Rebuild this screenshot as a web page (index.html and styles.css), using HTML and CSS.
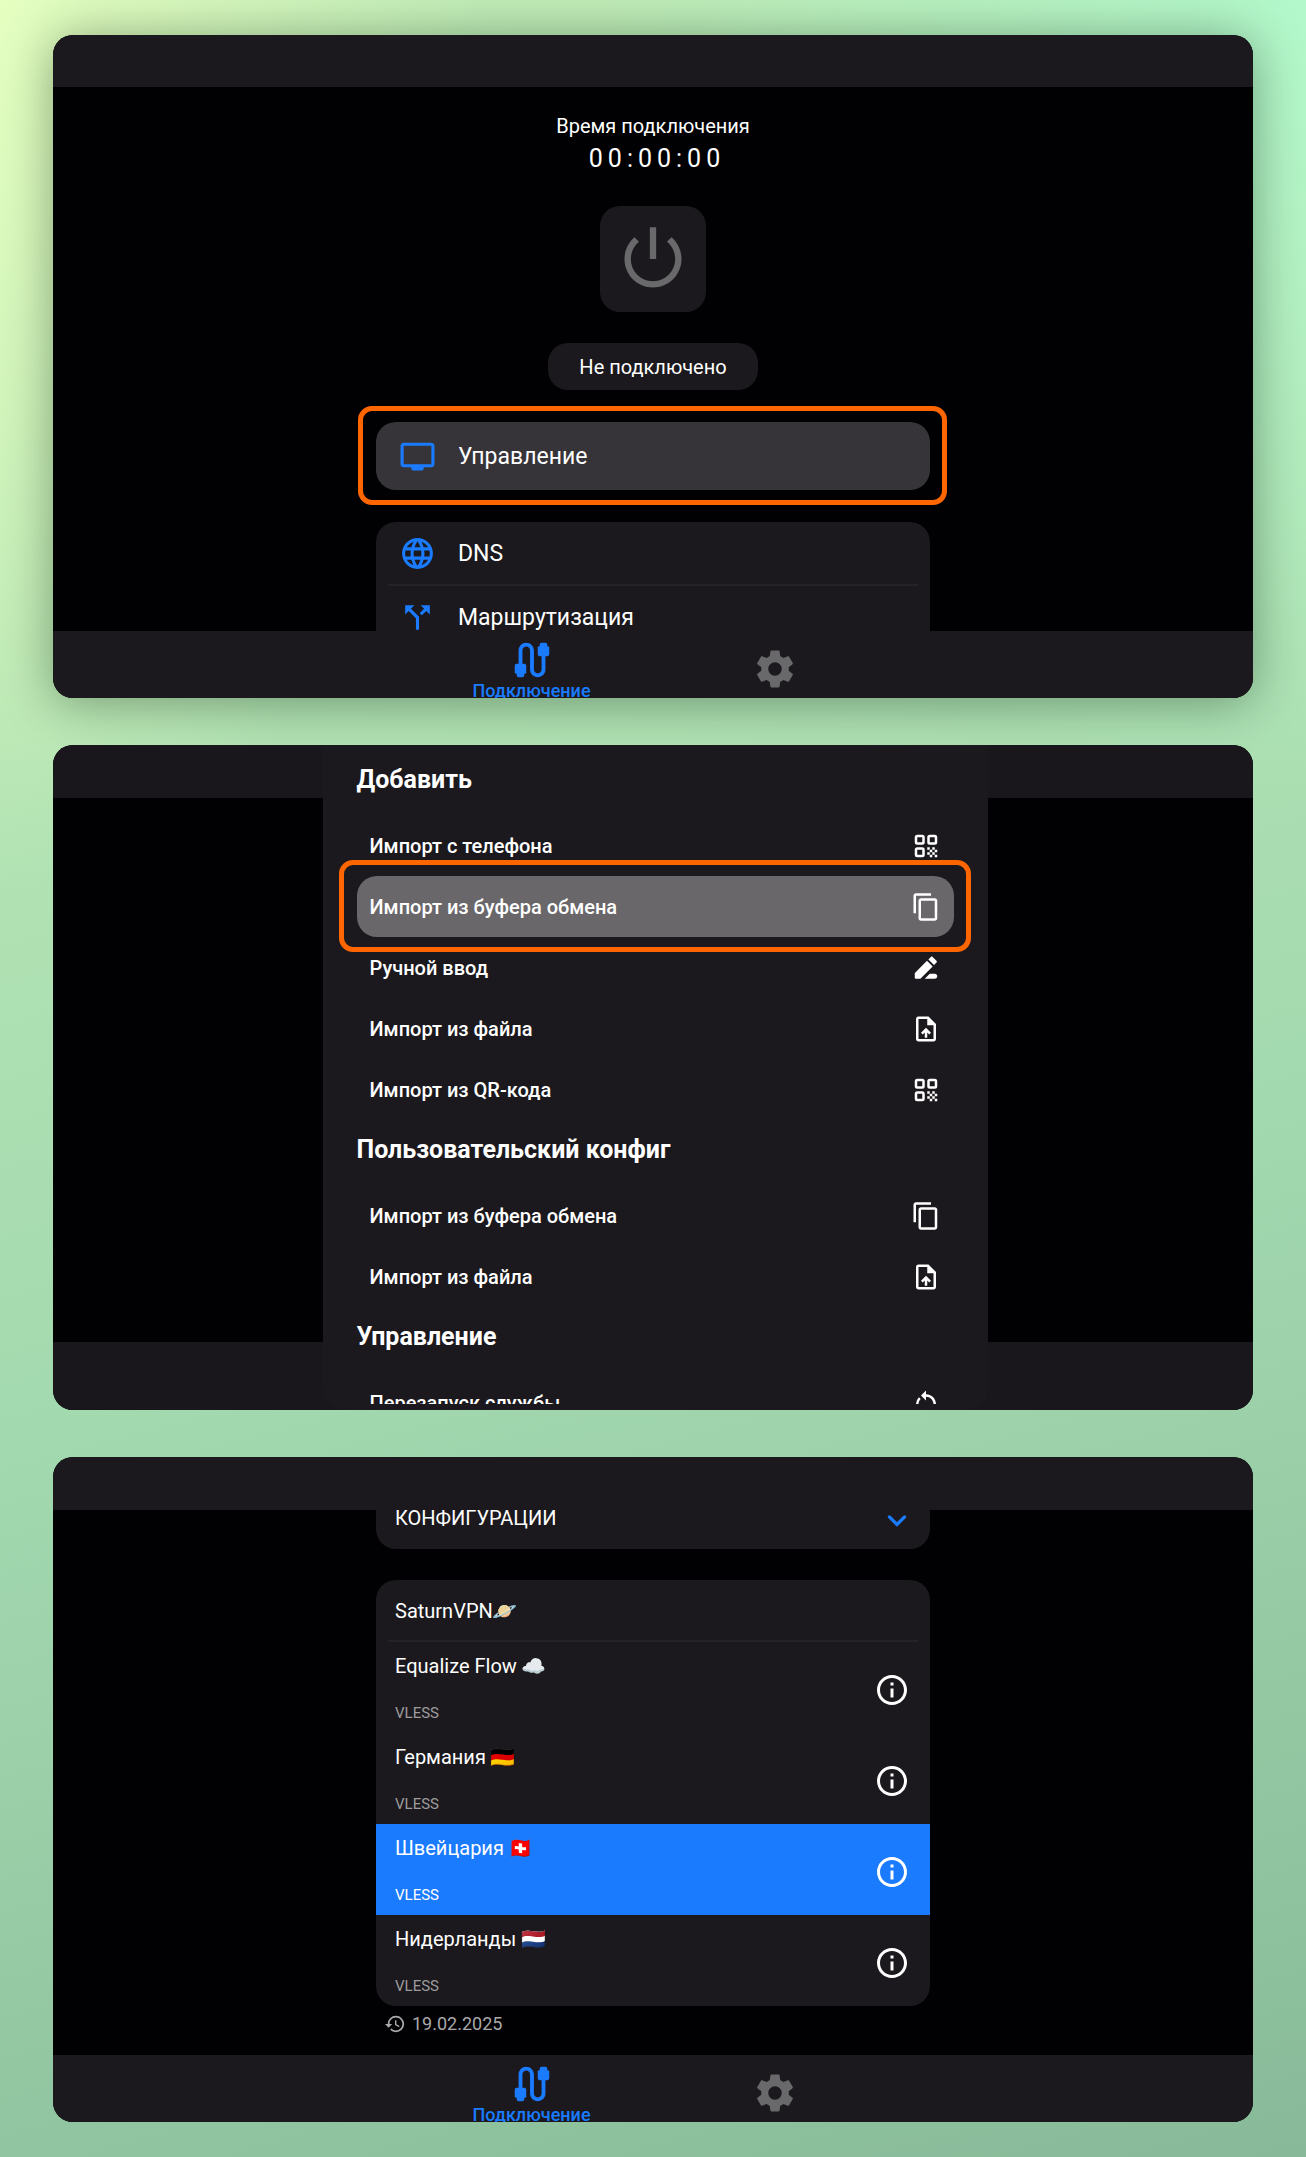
FILE: index.html
```html
<!DOCTYPE html>
<html lang="ru">
<head>
<meta charset="utf-8">
<meta name="viewport" content="width=device-width, initial-scale=1">
<title>Подключение VPN</title>
<link rel="stylesheet" href="styles.css">
</head>
<body>
<svg class="sprite" aria-hidden="true">
  <symbol id="power" viewBox="0 0 24 24"><path d="M13 2h-2v10h2V2zm4.830 3.170-1.420 1.420C17.990 7.860 19 9.810 19 12c0 3.870-3.130 7-7 7s-7-3.130-7-7c0-2.190 1.010-4.140 2.580-5.420L6.170 5.170C4.230 6.820 3 9.260 3 12c0 4.970 4.030 9 9 9s9-4.030 9-9c0-2.740-1.230-5.180-3.170-6.830z"/></symbol>
  <symbol id="tv" viewBox="0 0 24 24"><path d="M21 3H3c-1.100 0-2 .9-2 2v12c0 1.100.9 2 2 2h5v1c0 .55.45 1 1 1h6c.55 0 1-.45 1-1v-1h5c1.100 0 2-.9 2-2V5c0-1.100-.9-2-2-2zm0 14H3V5h18v12z"/></symbol>
  <symbol id="globe" viewBox="0 0 24 24"><path d="M11.990 2C6.470 2 2 6.480 2 12s4.470 10 9.990 10C17.520 22 22 17.520 22 12S17.520 2 11.990 2zm6.930 6h-2.950c-.32-1.250-.78-2.450-1.380-3.560 1.840.63 3.370 1.910 4.330 3.560zM12 4.040c.83 1.200 1.480 2.530 1.910 3.960h-3.820c.43-1.430 1.080-2.760 1.910-3.960zM4.260 14C4.100 13.360 4 12.690 4 12s.1-1.360.26-2h3.380c-.08.66-.14 1.320-.14 2s.06 1.340.14 2H4.260zm.82 2h2.950c.32 1.250.78 2.450 1.380 3.560-1.840-.63-3.370-1.900-4.330-3.560zm2.950-8H5.080c.96-1.660 2.490-2.930 4.330-3.560C8.810 5.550 8.350 6.750 8.030 8zM12 19.960c-.83-1.200-1.480-2.530-1.910-3.960h3.820c-.43 1.430-1.080 2.760-1.910 3.960zM14.340 14H9.660c-.09-.66-.16-1.320-.16-2s.07-1.350.16-2h4.680c.09.65.16 1.320.16 2s-.07 1.340-.16 2zm.25 5.560c.6-1.110 1.060-2.310 1.380-3.560h2.950c-.96 1.650-2.490 2.930-4.330 3.560zM16.360 14c.08-.66.14-1.320.14-2s-.06-1.340-.14-2h3.380c.16.64.26 1.310.26 2s-.1 1.360-.26 2h-3.380z"/></symbol>
  <symbol id="split" viewBox="0 0 24 24"><path d="M14 4l2.290 2.290-2.880 2.880 1.420 1.420 2.880-2.880L20 10V4zM10 4H4v6l2.290-2.290 4.710 4.700V20h2v-8.410l-5.290-5.300z"/></symbol>
  <symbol id="cable" viewBox="0 0 24 24"><path d="M20 5V4c0-.55-.45-1-1-1h-2c-.55 0-1 .45-1 1v1h-1v4c0 .55.45 1 1 1h1v7c0 1.100-.9 2-2 2s-2-.9-2-2V7c0-2.210-1.790-4-4-4S5 4.790 5 7v7H4c-.55 0-1 .45-1 1v4h1v1c0 .55.45 1 1 1h2c.55 0 1-.45 1-1v-1h1v-4c0-.55-.45-1-1-1H7V7c0-1.100.9-2 2-2s2 .9 2 2v10c0 2.210 1.790 4 4 4s4-1.790 4-4v-7h1c.55 0 1-.45 1-1V5h-1z"/></symbol>
  <symbol id="gear" viewBox="0 0 24 24"><path d="M19.140 12.940c.04-.3.06-.61.06-.94 0-.32-.02-.64-.07-.94l2.030-1.580c.18-.14.23-.41.12-.61l-1.920-3.320c-.12-.22-.37-.29-.59-.22l-2.390.96c-.5-.38-1.030-.7-1.620-.94l-.36-2.540c-.04-.24-.24-.41-.48-.41h-3.840c-.24 0-.43.17-.47.41l-.36 2.540c-.59.24-1.130.57-1.620.94l-2.390-.96c-.22-.08-.47 0-.59.22L2.740 8.870c-.12.21-.08.47.12.61l2.030 1.580c-.05.3-.09.63-.09.94s.02.64.07.94l-2.030 1.580c-.18.14-.23.41-.12.61l1.920 3.320c.12.22.37.29.59.22l2.390-.96c.5.38 1.030.7 1.620.94l.36 2.540c.05.24.24.41.48.41h3.840c.24 0 .44-.17.47-.41l.36-2.540c.59-.24 1.130-.56 1.620-.94l2.390.96c.22.08.47 0 .59-.22l1.920-3.320c.12-.22.07-.47-.12-.61l-2.010-1.580zM12 15.500c-1.930 0-3.500-1.570-3.500-3.500s1.570-3.500 3.500-3.500 3.500 1.570 3.500 3.500-1.570 3.500-3.500 3.500z"/></symbol>
  <symbol id="qr" viewBox="0 0 24 24">
    <g fill="none" stroke="currentColor" stroke-width="2"><rect x="4" y="4" width="6" height="6" rx="1"/><rect x="14" y="4" width="6" height="6" rx="1"/><rect x="4" y="14" width="6" height="6" rx="1"/></g>
    <path d="M13 13h2v2h-2zM15 15h2v2h-2zM13 17h2v2h-2zM17 17h2v2h-2zM15 19h2v2h-2zM19 19h2v2h-2zM17 13h2v2h-2zM19 15h2v2h-2z"/>
  </symbol>
  <symbol id="copy" viewBox="0 0 24 24"><path d="M16 1H4c-1.100 0-2 .9-2 2v14h2V3h12V1zm3 4H8c-1.100 0-2 .9-2 2v14c0 1.100.9 2 2 2h11c1.100 0 2-.9 2-2V7c0-1.100-.9-2-2-2zm0 16H8V7h11v14z"/></symbol>
  <symbol id="pen" viewBox="0 0 24 24"><path d="M3 17.500V19.500c0 .6.400 1 1 1h3.500L17.300 10.700 12.800 6.200 3.300 15.800c-.2.200-.3.400-.3.700zM18.400 9.600l2-2c.4-.4.400-1 0-1.400L17.300 3.100c-.4-.4-1-.4-1.400 0l-2 2zM15 16.500l-4 4h8c1.100 0 2-.9 2-2s-.9-2-2-2z"/></symbol>
  <symbol id="file" viewBox="0 0 24 24"><path d="M14 2H6c-1.100 0-2 .9-2 2v16c0 1.100.9 2 2 2h12c1.100 0 2-.9 2-2V8zM18 20H6V4h7v5h5zM8 15l1.400 1.400L11 14.800V19h2v-4.200l1.600 1.600L16 15l-4-4z"/></symbol>
  <symbol id="restart" viewBox="0 0 24 24"><path d="M12 5V2L8 6l4 4V7c3.310 0 6 2.690 6 6 0 2.970-2.170 5.430-5 5.910v2.020c3.950-.49 7-3.850 7-7.930 0-4.420-3.580-8-8-8zM6 13c0-1.650.67-3.150 1.760-4.240L6.340 7.340A7.950 7.950 0 0 0 4 13c0 4.080 3.050 7.440 7 7.930v-2.020c-2.830-.48-5-2.940-5-5.910z"/></symbol>
  <symbol id="info" viewBox="0 0 24 24"><path d="M11 7h2v2h-2zm0 4h2v6h-2zm1-9C6.480 2 2 6.480 2 12s4.480 10 10 10 10-4.480 10-10S17.520 2 12 2zm0 18c-4.410 0-8-3.590-8-8s3.590-8 8-8 8 3.590 8 8-3.590 8-8 8z"/></symbol>
  <symbol id="chevron" viewBox="0 0 24 24"><path d="M5 11l7 7 7-7" fill="none" stroke="currentColor" stroke-width="3" stroke-linecap="round"/></symbol>
  <symbol id="history" viewBox="0 0 24 24"><path d="M13 3a9 9 0 0 0-9 9H1l4 4 4-4H6c0-3.870 3.130-7 7-7s7 3.130 7 7-3.130 7-7 7c-1.930 0-3.680-.79-4.940-2.060l-1.420 1.420A8.950 8.950 0 0 0 13 21a9 9 0 0 0 0-18zm-1 5v5l4.250 2.520.77-1.280-3.520-2.090V8z"/></symbol>
</svg>

<main class="page">
  <section class="screen screen-raised" aria-label="Главный экран">
    <div class="bar-top"></div>
    <div class="content">
      <p class="caption">Время подключения</p>
      <p class="timer">00:00:00</p>
      <button class="power" type="button" aria-label="Подключить"><svg><use href="#power"/></svg></button>
      <p class="status">Не подключено</p>
      <div class="column">
        <button class="row row-manage marked" type="button"><svg class="accent"><use href="#tv"/></svg>Управление</button>
        <div class="group">
          <button class="row" type="button"><svg class="accent"><use href="#globe"/></svg>DNS</button>
          <hr>
          <button class="row" type="button"><svg class="accent"><use href="#split"/></svg>Маршрутизация</button>
        </div>
      </div>
    </div>
    <nav class="bar-bottom">
      <a class="tab tab-active" href="#connection"><svg><use href="#cable"/></svg>Подключение</a>
      <a class="tab" href="#settings" aria-label="Настройки"><svg><use href="#gear"/></svg></a>
    </nav>
  </section>

  <section class="screen" aria-label="Меню управления">
    <div class="backdrop">
      <div class="sheet">
        <div class="sheet-scroll">
          <h2>Добавить</h2>
          <button class="item" type="button">Импорт с телефона<svg><use href="#qr"/></svg></button>
          <button class="item item-selected marked" type="button">Импорт из буфера обмена<svg><use href="#copy"/></svg></button>
          <button class="item" type="button">Ручной ввод<svg><use href="#pen"/></svg></button>
          <button class="item" type="button">Импорт из файла<svg><use href="#file"/></svg></button>
          <button class="item" type="button">Импорт из QR-кода<svg><use href="#qr"/></svg></button>
          <h2>Пользовательский конфиг</h2>
          <button class="item" type="button">Импорт из буфера обмена<svg><use href="#copy"/></svg></button>
          <button class="item" type="button">Импорт из файла<svg><use href="#file"/></svg></button>
          <h2>Управление</h2>
          <button class="item" type="button">Перезапуск службы<svg><use href="#restart"/></svg></button>
        </div>
      </div>
    </div>
  </section>

  <section class="screen" aria-label="Список серверов">
    <div class="bar-top"></div>
    <div class="content content-scrolled">
      <div class="column">
        <button class="configs" type="button">КОНФИГУРАЦИИ<svg class="accent"><use href="#chevron"/></svg></button>
        <div class="group group-servers">
          <h3>SaturnVPN🪐</h3>
          <hr>
          <ul class="servers">
            <li class="server"><div><p class="name">Equalize Flow ☁️</p><p class="proto">VLESS</p></div><button type="button" aria-label="Сведения"><svg><use href="#info"/></svg></button></li>
            <li class="server"><div><p class="name">Германия 🇩🇪</p><p class="proto">VLESS</p></div><button type="button" aria-label="Сведения"><svg><use href="#info"/></svg></button></li>
            <li class="server server-selected"><div><p class="name">Швейцария 🇨🇭</p><p class="proto">VLESS</p></div><button type="button" aria-label="Сведения"><svg><use href="#info"/></svg></button></li>
            <li class="server"><div><p class="name">Нидерланды 🇳🇱</p><p class="proto">VLESS</p></div><button type="button" aria-label="Сведения"><svg><use href="#info"/></svg></button></li>
          </ul>
        </div>
        <p class="updated"><svg><use href="#history"/></svg>19.02.2025</p>
      </div>
    </div>
    <nav class="bar-bottom">
      <a class="tab tab-active" href="#connection"><svg><use href="#cable"/></svg>Подключение</a>
      <a class="tab" href="#settings" aria-label="Настройки"><svg><use href="#gear"/></svg></a>
    </nav>
  </section>
</main>
</body>
</html>
```
FILE: styles.css
```css
:root {
  --panel: #1b191d;
  --accent: #1a7bff;
  --mark: #ff6600;
}

* { box-sizing: border-box; }

body {
  margin: 0;
  background: linear-gradient(165deg, #c4efb9 0%, #a3d9af 58%, #88ba99 100%);
  color: #fff;
  font: 20px/24px Roboto, "Noto Color Emoji", sans-serif;
}

p, h2, h3, ul { margin: 0; padding: 0; font-weight: 400; }

ul { list-style: none; }

svg { display: block; flex: none; fill: currentColor; }

.sprite { position: absolute; width: 0; height: 0; }

button {
  margin: 0;
  padding: 0;
  border: 0;
  background: none;
  color: inherit;
  font: inherit;
  text-align: left;
}

.accent { color: var(--accent); }

.page {
  display: flex;
  flex-direction: column;
  gap: 47px;
  padding: 35px 53px;
  background:
    radial-gradient(ellipse 480px 900px at 0 0, #e4ffc0 0%, #d0f4be00 100%),
    radial-gradient(ellipse 700px 800px at 100% 0, #b2f8ca 0%, #b2f8ca00 100%);
}

.screen {
  display: flex;
  flex-direction: column;
  aspect-ratio: 1200 / 665;
  border-radius: 20px;
  background: #010002;
  overflow: hidden;
}

.screen-raised {
  aspect-ratio: 1200 / 663;
  box-shadow: 0 4px 50px rgba(0, 30, 10, 0.4);
}

.bar-top { flex: none; height: 53px; background: var(--panel); }

.screen-raised .bar-top { height: 52px; }

.content {
  display: flex;
  flex: 1;
  flex-direction: column;
  align-items: center;
  min-height: 0;
  padding-top: 27px;
  overflow: hidden;
}

.timer {
  margin-top: 8px;
  padding-left: 8px;
  font-size: 25px;
  line-height: 26px;
  letter-spacing: 5px;
}

.power {
  display: grid;
  place-items: center;
  width: 106px;
  height: 106px;
  margin-top: 34px;
  border-radius: 20px;
  background: var(--panel);
  color: #69686a;
  flex: none;
}

.power svg { width: 76px; height: 76px; }

.status {
  margin-top: 31px;
  padding: 12px 31px 11px;
  border-radius: 20px;
  background: var(--panel);
}

.column { width: 554px; max-width: 100%; }

.row {
  display: flex;
  align-items: center;
  gap: 22px;
  width: 100%;
  height: 62px;
  padding: 1px 0 0 23px;
  font-size: 23px;
}

.row svg { width: 37px; height: 37px; }

.row-manage {
  height: 68px;
  margin: 32px 0;
  border-radius: 20px;
  background: #363438;
}

.marked { position: relative; }

.marked::after {
  position: absolute;
  inset: -16px -17px -15px -18px;
  border: 5px solid var(--mark);
  border-radius: 14px;
  content: "";
}

.group { border-radius: 20px; background: var(--panel); overflow: hidden; }

hr { height: 2px; margin: 0 12px; border: 0; background: #242326; }

.bar-bottom {
  display: flex;
  flex: none;
  justify-content: center;
  height: 67px;
  background: var(--panel);
  overflow: hidden;
}

.tab {
  display: flex;
  flex-direction: column;
  align-items: center;
  width: 243px;
  padding-top: 15px;
  color: #69686a;
  font-size: 18px;
  font-weight: 500;
  line-height: 16px;
  text-decoration: none;
}

.tab svg { width: 46px; height: 46px; }

.tab-active { padding-top: 6px; color: var(--accent); }

.backdrop {
  display: flex;
  flex: 1;
  justify-content: center;
  min-height: 0;
  padding-left: 4px;
  background: linear-gradient(#19171b 53px, transparent 53px calc(100% - 68px), #19171b calc(100% - 68px));
}

.sheet {
  width: 665px;
  padding: 0 34px 6px;
  border-radius: 0 0 20px 20px;
  background: var(--panel);
}

.sheet-scroll {
  height: 100%;
  padding-top: 5px;
  overflow: visible clip;
}

.sheet h2 {
  padding-bottom: 5px;
  font-size: 25px;
  font-weight: 700;
  line-height: 60px;
}

.item {
  display: flex;
  align-items: center;
  justify-content: space-between;
  width: 100%;
  height: 61px;
  padding: 0 13px;
  border-radius: 20px;
  font-weight: 500;
}

.item svg { width: 30px; height: 30px; }

.item-selected { background: #69676a; }

.content-scrolled { padding-top: 0; }

.configs {
  display: flex;
  align-items: center;
  justify-content: space-between;
  width: 100%;
  height: 39px;
  padding: 0 20px 24px 19px;
  border-radius: 0 0 20px 20px;
  background: var(--panel);
}

.configs svg { width: 26px; height: 26px; }

.group-servers { margin-top: 31px; }

.group-servers h3 { padding: 19px 19px 17px; font-size: 20px; }

.server {
  display: flex;
  align-items: center;
  justify-content: space-between;
  height: 91px;
  padding: 4px 20px 0 19px;
}

.server svg { width: 36px; height: 36px; }

.server-selected { background: var(--accent); }

.proto { margin-top: 23px; color: #9d9c9e; font-size: 15px; }

.server-selected .proto { color: inherit; }

.updated {
  display: flex;
  align-items: center;
  gap: 6px;
  padding: 6px 8px;
  color: #a9a8aa;
  font-size: 18px;
}

.updated svg { width: 22px; height: 22px; }
```
